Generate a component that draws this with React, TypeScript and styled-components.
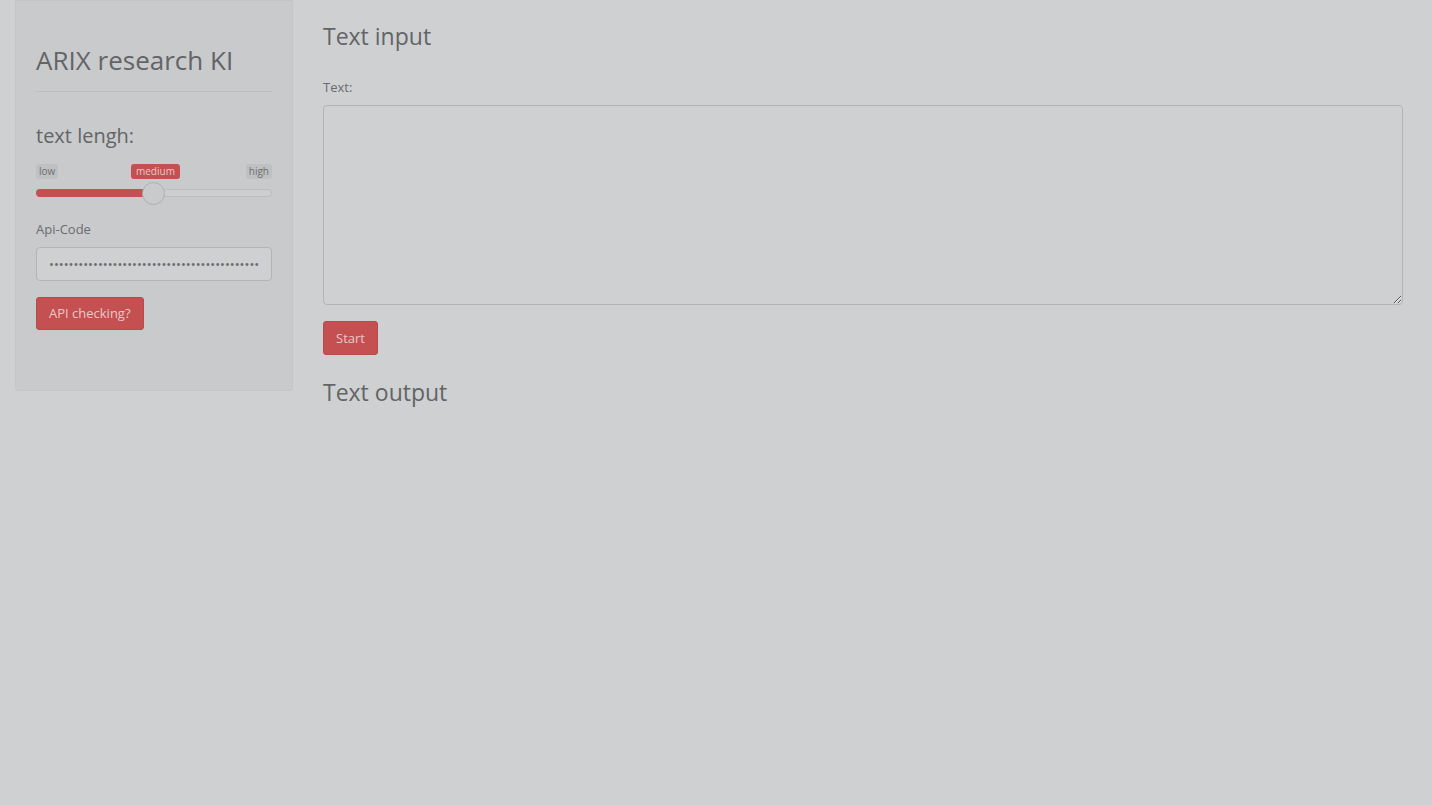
import React from "react";
import styled, { createGlobalStyle } from "styled-components";

const Global = createGlobalStyle`
  html, body { margin: 0; padding: 0; background: #cfd0d2; }
  body { font-family: "Open Sans", "Liberation Sans", sans-serif; font-size: 13px; color: #666; }
  * { box-sizing: border-box; }
`;

const Page = styled.div`
  display: flex;
  align-items: flex-start;
  gap: 30px;
  padding: 0 29px 0 15px;
  min-height: 805px;
`;

const Well = styled.div`
  width: 278px;
  flex: none;
  background: #c9cacc;
  border: 1px solid #c4c5c7;
  border-top: none;
  border-radius: 0 0 4px 4px;
  padding: 43px 20px 60px 20px;
  box-shadow: inset 0 1px 1px rgba(0,0,0,0.03);
`;

const Title = styled.h1`
  margin: 0;
  font-size: 26px;
  font-weight: 400;
  line-height: 34px;
  color: #636466;
`;

const Rule = styled.hr`
  border: none;
  border-top: 1px solid #bdbec0;
  margin: 14px 0 0 0;
`;

const SubTitle = styled.div`
  margin-top: 31px;
  font-size: 20px;
  line-height: 26px;
  color: #636466;
`;

const SliderBox = styled.div`
  position: relative;
  height: 47px;
  margin-top: 12px;
`;

const Tag = styled.span<{ $active?: boolean }>`
  position: absolute;
  top: 3px;
  font-size: 10px;
  line-height: 15px;
  padding: 0 ${(p) => (p.$active ? "5px" : "3px")};
  border-radius: 3px;
  background: ${(p) => (p.$active ? "#c45052" : "#bfc0c2")};
  color: ${(p) => (p.$active ? "#e9c8c8" : "#6e6f71")};
`;

const Track = styled.div`
  position: absolute;
  left: 0;
  right: 0;
  top: 28px;
  height: 8px;
  border-radius: 4px;
  background: #cdced0;
  border: 1px solid #bcbdbf;
`;

const Fill = styled.div`
  position: absolute;
  left: 0;
  top: 28px;
  height: 8px;
  border-radius: 4px 0 0 4px;
  background: #c45052;
`;

const Handle = styled.div`
  position: absolute;
  top: 21px;
  width: 23px;
  height: 23px;
  margin-left: -11.5px;
  border-radius: 50%;
  background: #c9cacc;
  border: 1px solid #aeafb1;
`;

const Label = styled.label`
  display: block;
  font-size: 13px;
  line-height: 18px;
  color: #6a6b6d;
`;

const ApiLabel = styled(Label)`
  margin-top: 12px;
  margin-bottom: 9px;
`;

const PassInput = styled.input`
  display: block;
  width: 100%;
  height: 34px;
  padding: 6px 12px;
  border: 1px solid #b3b4b6;
  border-radius: 4px;
  background: #cfd0d2;
  color: #6b6c6e;
  font-family: "Open Sans", sans-serif;
  font-size: 13px;
  outline: none;
`;

const RedButton = styled.button`
  display: inline-block;
  height: 33px;
  padding: 0 12px;
  border: 1px solid #b84a4b;
  border-radius: 3px;
  background: #c45052;
  color: #e9c8c8;
  font-family: "Open Sans", sans-serif;
  font-size: 13px;
  line-height: 31px;
`;

const ApiButton = styled(RedButton)`
  margin-top: 16px;
`;

const Main = styled.div`
  flex: 1;
  display: flex;
  flex-direction: column;
  align-items: flex-start;
`;

const Heading = styled.h3`
  margin: 21px 0 0 0;
  font-size: 23px;
  font-weight: 400;
  line-height: 30px;
  color: #636466;
`;

const TextLabel = styled(Label)`
  margin-top: 27px;
  margin-bottom: 9px;
`;

const TextArea = styled.textarea`
  display: block;
  width: 100%;
  height: 200px;
  border: 1px solid #b3b4b6;
  border-radius: 4px;
  background: #cfd0d2;
  outline: none;
  padding: 6px 12px;
`;

const StartButton = styled(RedButton)`
  margin-top: 16px;
  height: 34px;
  line-height: 32px;
`;

const OutHeading = styled(Heading)`
  margin-top: 22px;
`;

export default function App() {
  const pct = 49.8;
  return (
    <>
      <Global />
      <Page>
        <Well>
          <Title>ARIX research KI</Title>
          <Rule />
          <SubTitle>text lengh:</SubTitle>
          <SliderBox>
            <Tag style={{ left: 0 }}>low</Tag>
            <Tag $active style={{ left: "95px" }}>medium</Tag>
            <Tag style={{ right: 0 }}>high</Tag>
            <Track />
            <Fill style={{ width: `${pct}%` }} />
            <Handle style={{ left: `${pct}%` }} />
          </SliderBox>
          <ApiLabel>Api-Code</ApiLabel>
          <PassInput type="password" readOnly value={"x".repeat(60)} />
          <ApiButton>API checking?</ApiButton>
        </Well>
        <Main>
          <Heading>Text input</Heading>
          <TextLabel>Text:</TextLabel>
          <TextArea />
          <StartButton>Start</StartButton>
          <OutHeading>Text output</OutHeading>
        </Main>
      </Page>
    </>
  );
}
